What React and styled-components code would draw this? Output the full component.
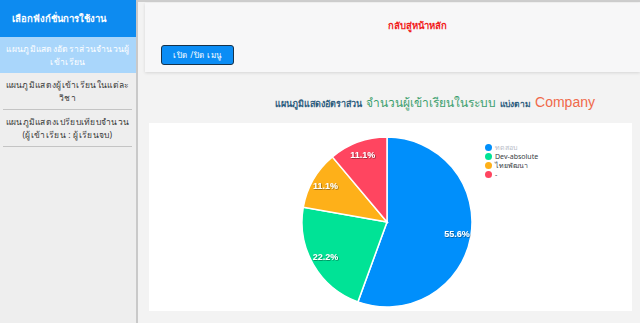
import React from 'react';
import styled, { createGlobalStyle } from 'styled-components';

const GlobalStyle = createGlobalStyle`
  html, body {
    margin: 0;
    padding: 0;
    background: #f3f3f3;
    font-family: "Noto Sans", "DejaVu Sans", sans-serif;
  }
`;

const Page = styled.div`
  display: flex;
  width: 640px;
  height: 323px;
  overflow: hidden;
`;

const Sidebar = styled.div`
  width: 136px;
  flex-shrink: 0;
  background: #eeeeee;
  border-right: 2px solid #c9c9c9;
  display: flex;
  flex-direction: column;
`;

const SideHeader = styled.div`
  height: 37px;
  background: #0d8bf0;
  color: #fff;
  font-weight: bold;
  font-size: 9.5px;
  display: flex;
  align-items: center;
  padding-left: 12px;
  white-space: nowrap;
`;

const SideItem = styled.div`
  background: ${(p) => (p.active ? '#a9d6fb' : 'transparent')};
  color: ${(p) => (p.active ? '#fff' : '#3a3a3a')};
  font-size: 8.5px;
  letter-spacing: 0.3px;
  line-height: 13px;
  white-space: nowrap;
  text-align: center;
  display: flex;
  flex-direction: column;
  justify-content: center;
  height: 36px;
  margin: ${(p) => (p.active ? '0' : '0 4px 0 3px')};
  border-bottom: ${(p) => (p.active ? 'none' : '1px solid #c4c4c4')};
`;

const Main = styled.div`
  flex: 1;
  border-top: 2px solid #cdcdcd;
  display: flex;
  flex-direction: column;
`;

const TopCard = styled.div`
  margin: 1px 0 0 7px;
  height: 69px;
  background: #f7f7f8;
  box-shadow: 0 1px 3px rgba(0, 0, 0, 0.12);
  display: flex;
  flex-direction: column;
  padding-left: 16px;
  box-sizing: border-box;
`;

const HomeLink = styled.div`
  color: #f11d1d;
  font-weight: bold;
  font-size: 9.5px;
  text-align: center;
  margin-top: 15px;
  margin-left: 141px;
  width: 230px;
`;

const MenuButton = styled.button`
  align-self: flex-start;
  margin-top: 12px;
  width: 73px;
  height: 20px;
  background: #0b8df5;
  color: #fff;
  border: 1px solid #17324a;
  border-radius: 3px;
  font-family: inherit;
  font-size: 8px;
  letter-spacing: 0.5px;
  padding: 0;
`;

const ChartTitle = styled.div`
  display: flex;
  align-items: baseline;
  justify-content: center;
  gap: 4px;
  margin: 21px 0 0 92px;
  height: 30px;
  white-space: nowrap;
`;

const TitlePart = styled.span`
  color: ${(p) => p.color};
  font-size: ${(p) => p.size}px;
  font-weight: ${(p) => (p.bold ? 'bold' : 'normal')};
  font-family: ${(p) => (p.latin ? '"Liberation Sans", Arial, sans-serif' : 'inherit')};
`;

const ChartCard = styled.div`
  margin: 0 8px 0 11px;
  height: 188px;
  background: #ffffff;
  display: flex;
  align-items: flex-start;
  padding-left: 152px;
  gap: 12px;
`;

const PieSvg = styled.svg`
  margin-top: 13px;
  flex-shrink: 0;
`;

const Legend = styled.div`
  margin-top: 20px;
  display: flex;
  flex-direction: column;
`;

const LegendRow = styled.div`
  display: flex;
  align-items: center;
  gap: 3px;
  height: 9px;
  font-size: 7px;
  color: ${(p) => (p.faded ? '#b7bcc8' : '#373d3f')};
`;

const Dot = styled.span`
  width: 7px;
  height: 7px;
  border-radius: 50%;
  background: ${(p) => p.color};
`;

const slices = [
  { name: 'ทดสอบ', value: 5, color: '#008ffb', faded: true },
  { name: 'Dev-absolute', value: 2, color: '#00e396' },
  { name: 'ไทยพัฒนา', value: 1, color: '#feb019' },
  { name: '-', value: 1, color: '#ff4560' },
];

const menu = [
  ['แผนภูมิแสดงอัตราส่วนจำนวนผู้', 'เข้าเรียน'],
  ['แผนภูมิแสดงผู้เข้าเรียนในแต่ละ', 'วิชา'],
  ['แผนภูมิแสดงเปรียบเทียบจำนวน', '(ผู้เข้าเรียน : ผู้เรียนจบ)'],
];

function Pie() {
  const r = 85;
  const c = 86;
  const total = slices.reduce((s, x) => s + x.value, 0);
  let start = -90;
  const parts = slices.map((s) => {
    const sweep = (s.value / total) * 360;
    const end = start + sweep;
    const a0 = (start * Math.PI) / 180;
    const a1 = (end * Math.PI) / 180;
    const mid = ((start + sweep / 2) * Math.PI) / 180;
    const d = `M${c},${c} L${c + r * Math.cos(a0)},${c + r * Math.sin(a0)} A${r},${r} 0 ${sweep > 180 ? 1 : 0} 1 ${c + r * Math.cos(a1)},${c + r * Math.sin(a1)} Z`;
    const label = {
      x: c + 71 * Math.cos(mid),
      y: c + 71 * Math.sin(mid),
      text: ((s.value / total) * 100).toFixed(1) + '%',
    };
    start = end;
    return { d, color: s.color, label };
  });
  return (
    <PieSvg width="172" height="172" viewBox="0 0 172 172">
      <defs>
        <filter id="sh" x="-20%" y="-20%" width="140%" height="140%">
          <feDropShadow dx="0.6" dy="0.6" stdDeviation="0.6" floodColor="#000" floodOpacity="0.55" />
        </filter>
      </defs>
      {parts.map((p, i) => (
        <path key={i} d={p.d} fill={p.color} stroke="#fff" strokeWidth="1.5" />
      ))}
      {parts.map((p, i) => (
        <text
          key={'t' + i}
          x={p.label.x}
          y={p.label.y}
          fill="#fff"
          fontSize="9"
          fontWeight="bold"
          textAnchor="middle"
          dominantBaseline="middle"
          filter="url(#sh)"
          fontFamily="'Liberation Sans', Arial, sans-serif"
        >
          {p.label.text}
        </text>
      ))}
    </PieSvg>
  );
}

export default function App() {
  return (
    <>
      <GlobalStyle />
      <Page>
        <Sidebar>
          <SideHeader>เลือกฟังก์ชั่นการใช้งาน</SideHeader>
          {menu.map((m, i) => (
            <SideItem key={i} active={i === 0}>
              <span>{m[0]}</span>
              <span>{m[1]}</span>
            </SideItem>
          ))}
        </Sidebar>
        <Main>
          <TopCard>
            <HomeLink>กลับสู่หน้าหลัก</HomeLink>
            <MenuButton>เปิด /ปิด เมนู</MenuButton>
          </TopCard>
          <ChartTitle>
            <TitlePart color="#2e5d7e" size={9} bold>แผนภูมิแสดงอัตราส่วน</TitlePart>
            <TitlePart color="#3c9f6e" size={12}>จำนวนผู้เข้าเรียนในระบบ</TitlePart>
            <TitlePart color="#2e5d7e" size={8.5} bold>แบ่งตาม</TitlePart>
            <TitlePart color="#f0694a" size={14} latin>Company</TitlePart>
          </ChartTitle>
          <ChartCard>
            <Pie />
            <Legend>
              {slices.map((s) => (
                <LegendRow key={s.name} faded={s.faded}>
                  <Dot color={s.color} />
                  {s.name}
                </LegendRow>
              ))}
            </Legend>
          </ChartCard>
        </Main>
      </Page>
    </>
  );
}
